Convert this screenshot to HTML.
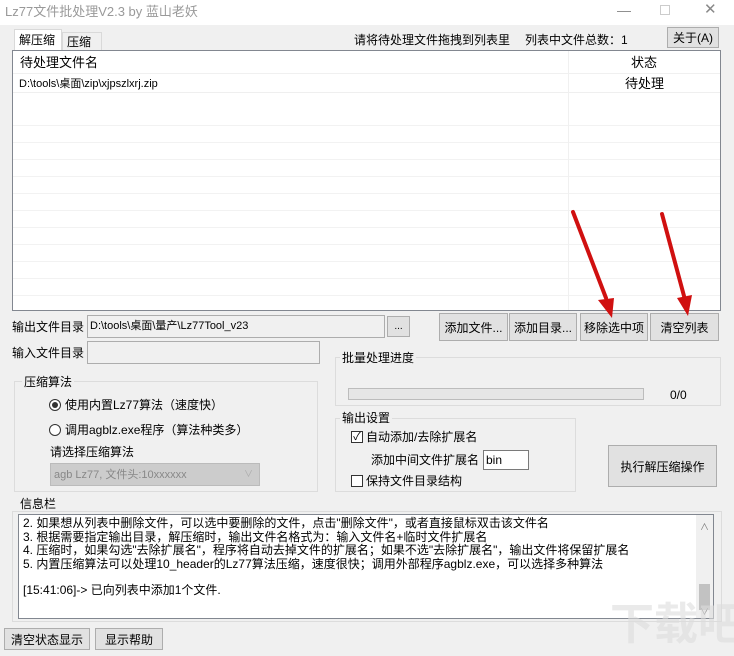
<!DOCTYPE html>
<html><head><meta charset="utf-8"><style>
*{box-sizing:border-box;margin:0;padding:0}
body{width:734px;height:656px;background:#f0f0f0;font-family:"Liberation Sans","Noto Sans CJK SC",sans-serif;font-size:12px;color:#000;position:relative;overflow:hidden}
.a{position:absolute;white-space:nowrap;line-height:14px}
.btn{position:absolute;background:#e1e1e1;border:1px solid #adadad;display:flex;align-items:center;justify-content:center}
.inp{position:absolute;background:#fff;border:1px solid #7a7a7a}
.grp{position:absolute;border:1px solid #dcdcdc}
.lbl{position:absolute;background:#f0f0f0;padding:0 2px;line-height:14px}
</style></head><body>
<div class="a" style="left:0;top:0;width:734px;height:25px;background:#fff"></div>
<div class="a" style="left:5px;top:5px;color:#999;font-size:13px">Lz77文件批处理V2.3 by 蓝山老妖</div>
<div class="a" style="left:617px;top:3px;color:#888;font-size:14px">—</div>
<div class="a" style="left:660px;top:5px;width:10px;height:10px;border:1px solid #ccc"></div>
<div class="a" style="left:704px;top:3px;color:#888;font-size:15px">✕</div>

<div class="a" style="left:14px;top:29px;width:48px;height:22px;background:#fff;border:1px solid #d9d9d9;border-bottom:none"></div>
<div class="a" style="left:19px;top:33px">解压缩</div>
<div class="a" style="left:62px;top:32px;width:40px;height:19px;border:1px solid #d9d9d9;border-bottom:none"></div>
<div class="a" style="left:67px;top:35px">压缩</div>
<div class="a" style="left:354px;top:33px">请将待处理文件拖拽到列表里</div>
<div class="a" style="left:525px;top:33px">列表中文件总数：1</div>
<div class="btn" style="left:667px;top:27px;width:52px;height:21px">关于(A)</div>

<div class="a" style="left:12px;top:50px;width:709px;height:261px;background:#fff;border:1px solid #828790"></div>
<div class="a" style="left:13px;top:73px;width:707px;height:1px;background:#f0f0f0"></div>
<div class="a" style="left:13px;top:92px;width:707px;height:1px;background:#efefef"></div>
<div class="a" style="left:13px;top:109px;width:707px;background:repeating-linear-gradient(#fff 0 16px,#f2f2f2 16px 17px);height:201px"></div>
<div class="a" style="left:568px;top:51px;width:1px;height:259px;background:#f0f0f0"></div>
<div class="a" style="left:20px;top:56px;font-size:13px">待处理文件名</div>
<div class="a" style="left:631px;top:56px;font-size:13px">状态</div>
<div class="a" style="left:19px;top:77px;font-size:11px">D:\tools\桌面\zip\xjpszlxrj.zip</div>
<div class="a" style="left:625px;top:77px;font-size:13px">待处理</div>

<div class="a" style="left:12px;top:320px">输出文件目录</div>
<div class="inp" style="left:87px;top:315px;width:298px;height:23px;background:#f0f0f0;border-color:#adadad"></div>
<div class="a" style="left:90px;top:319px;font-size:11px">D:\tools\桌面\量产\Lz77Tool_v23</div>
<div class="btn" style="left:387px;top:316px;width:23px;height:21px;font-size:10px">...</div>
<div class="btn" style="left:439px;top:313px;width:69px;height:28px">添加文件...</div>
<div class="btn" style="left:509px;top:313px;width:68px;height:28px">添加目录...</div>
<div class="btn" style="left:580px;top:313px;width:68px;height:28px">移除选中项</div>
<div class="btn" style="left:650px;top:313px;width:69px;height:28px">清空列表</div>

<div class="a" style="left:12px;top:346px">输入文件目录</div>
<div class="inp" style="left:87px;top:341px;width:233px;height:23px;background:#f0f0f0;border-color:#adadad"></div>

<div class="grp" style="left:14px;top:381px;width:304px;height:111px"></div>
<div class="lbl" style="left:22px;top:375px">压缩算法</div>
<div class="a" style="left:49px;top:399px;width:12px;height:12px;border:1px solid #333;border-radius:50%;background:#fff"></div>
<div class="a" style="left:52px;top:402px;width:6px;height:6px;border-radius:50%;background:#333"></div>
<div class="a" style="left:65px;top:398px">使用内置Lz77算法（速度快）</div>
<div class="a" style="left:49px;top:424px;width:12px;height:12px;border:1px solid #333;border-radius:50%;background:#fff"></div>
<div class="a" style="left:65px;top:423px">调用agblz.exe程序（算法种类多）</div>
<div class="a" style="left:50px;top:445px">请选择压缩算法</div>
<div class="a" style="left:50px;top:463px;width:210px;height:23px;background:#ccc;border:1px solid #bbb"></div>
<div class="a" style="left:54px;top:468px;color:#888;font-size:11px">agb Lz77, 文件头:10xxxxxx</div>
<div class="a" style="left:244px;top:467px;color:#aaa;font-size:9px">∨</div>

<div class="grp" style="left:335px;top:357px;width:386px;height:49px"></div>
<div class="lbl" style="left:340px;top:351px">批量处理进度</div>
<div class="a" style="left:348px;top:388px;width:296px;height:12px;background:#e6e6e6;border:1px solid #bcbcbc"></div>
<div class="a" style="left:670px;top:388px">0/0</div>

<div class="grp" style="left:335px;top:418px;width:241px;height:74px"></div>
<div class="lbl" style="left:340px;top:411px">输出设置</div>
<div class="a" style="left:351px;top:431px;width:12px;height:12px;border:1px solid #333;background:#fff;font-size:11px;line-height:10px;text-align:center">✓</div>
<div class="a" style="left:366px;top:430px">自动添加/去除扩展名</div>
<div class="a" style="left:371px;top:453px">添加中间文件扩展名</div>
<div class="inp" style="left:483px;top:450px;width:46px;height:20px"></div>
<div class="a" style="left:486px;top:453px">bin</div>
<div class="a" style="left:351px;top:475px;width:12px;height:12px;border:1px solid #333;background:#fff"></div>
<div class="a" style="left:366px;top:474px">保持文件目录结构</div>
<div class="btn" style="left:608px;top:445px;width:109px;height:42px">执行解压缩操作</div>

<div class="grp" style="left:12px;top:511px;width:710px;height:111px"></div>
<div class="lbl" style="left:18px;top:497px">信息栏</div>
<div class="inp" style="left:18px;top:514px;width:696px;height:105px;border-color:#828790"></div>
<div class="a" style="left:696px;top:515px;width:17px;height:103px;background:#f0f0f0"></div>
<div class="a" style="left:699px;top:584px;width:11px;height:26px;background:#c2c2c2"></div>
<div class="a" style="left:700px;top:520px;color:#777;font-size:9px">∧</div>
<div class="a" style="left:700px;top:605px;color:#777;font-size:9px">∨</div>
<div class="a" style="left:23px;top:517px;line-height:13.7px;font-size:12px">2. 如果想从列表中删除文件，可以选中要删除的文件，点击"删除文件"，或者直接鼠标双击该文件名<br>3. 根据需要指定输出目录，解压缩时，输出文件名格式为：输入文件名+临时文件扩展名<br>4. 压缩时，如果勾选"去除扩展名"，程序将自动去掉文件的扩展名；如果不选"去除扩展名"，输出文件将保留扩展名<br>5. 内置压缩算法可以处理10_header的Lz77算法压缩，速度很快；调用外部程序agblz.exe，可以选择多种算法</div>
<div class="a" style="left:23px;top:583px">[15:41:06]-&gt; 已向列表中添加1个文件.</div>

<div class="btn" style="left:4px;top:628px;width:86px;height:22px">清空状态显示</div>
<div class="btn" style="left:95px;top:628px;width:68px;height:22px">显示帮助</div>
<div class="a" style="left:610px;top:600px;font-size:44px;color:rgba(220,220,220,0.6);font-weight:bold;line-height:50px">下载吧</div>

<svg class="a" style="left:0;top:0" width="734" height="656">
<g stroke="#d01010" stroke-width="4" stroke-linecap="round" fill="#d01010">
<line x1="573" y1="212" x2="606" y2="298"/>
<line x1="662" y1="214" x2="684" y2="296"/>
</g>
<polygon points="598,300 614,298 612,318" fill="#d01010"/>
<polygon points="677,298 692,295 688,316" fill="#d01010"/>
</svg>
</body></html>
